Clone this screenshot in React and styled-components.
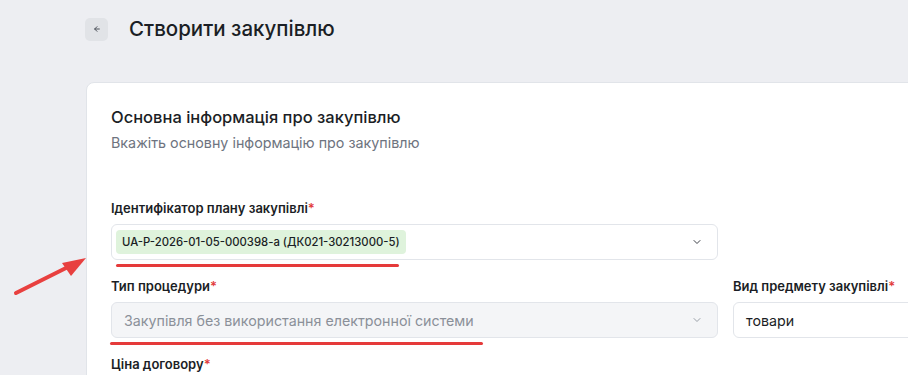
import styled, { createGlobalStyle } from "styled-components";

const GlobalStyle = createGlobalStyle`
  html, body {
    margin: 0;
    padding: 0;
    background: #edeef2;
    overflow: hidden;
    font-family: Inter, "Noto Sans", sans-serif;
    color: #1b1e25;
  }
`;

const Page = styled.div`
  position: relative;
  width: 908px;
  height: 375px;
  overflow: hidden;
  padding: 17px 0 0 85px;
  box-sizing: border-box;
`;

const Header = styled.div`
  display: flex;
  align-items: center;
  gap: 21px;
  height: 24px;
`;

const BackButton = styled.button`
  width: 23px;
  height: 23px;
  border: none;
  border-radius: 5px;
  background: #e1e3e7;
  display: flex;
  align-items: center;
  justify-content: center;
  padding: 0;
  color: #4b5059;
`;

const Title = styled.h1`
  margin: 0;
  font-size: 20.5px;
  font-weight: 500;
  line-height: 24px;
`;

const Card = styled.section`
  margin-top: 41px;
  margin-left: 1px;
  width: 1100px;
  background: #fff;
  border: 1px solid #e1e4e9;
  border-radius: 8px;
  padding: 22px 24px;
  box-sizing: border-box;
`;

const CardTitle = styled.h2`
  margin: 0;
  font-size: 16.5px;
  font-weight: 500;
  line-height: 24px;
`;

const CardSubtitle = styled.p`
  margin: 4px 0 0;
  font-size: 14.3px;
  line-height: 20px;
  color: #6e7480;
`;

const Form = styled.div`
  margin-top: 45px;
  display: grid;
  grid-template-columns: 607px 300px;
  column-gap: 15px;
  row-gap: 16px;
`;

const Field = styled.div`
  position: relative;
`;

const Label = styled.label`
  display: block;
  font-size: 13px;
  font-weight: 600;
  line-height: 20px;
  margin-bottom: 6px;
  color: #1b1e25;
  span {
    color: #e23b3b;
  }
`;

const SelectBox = styled.div`
  height: 36px;
  box-sizing: border-box;
  border: 1px solid #e2e5ea;
  border-radius: 6px;
  background: ${(p) => (p.$disabled ? "#f4f5f7" : "#fff")};
  display: flex;
  align-items: center;
  justify-content: space-between;
  padding: 0 14px 0 ${(p) => (p.$tag ? "4px" : "12px")};
  font-size: 14.25px;
  color: ${(p) => (p.$disabled ? "#8b9099" : "#1b1e25")};
`;

const Tag = styled.span`
  background: #dff3dc;
  border-radius: 4px;
  height: 24px;
  display: flex;
  align-items: center;
  padding: 0 6px;
  font-size: 11.3px;
  font-weight: 500;
  color: #1b1e25;
`;

const Chevron = styled.svg`
  width: 12px;
  height: 12px;
  color: ${(p) => (p.$muted ? "#9aa0a8" : "#3b3f47")};
`;

const Underline = styled.div`
  position: absolute;
  left: ${(p) => p.$left}px;
  width: ${(p) => p.$width}px;
  bottom: -7px;
  height: 3px;
  border-radius: 2px;
  background: #e53a3a;
`;

const Arrow = styled.svg`
  position: absolute;
  left: 0;
  top: 240px;
  width: 100px;
  height: 70px;
`;

const ChevronDown = ({ muted }) => (
  <Chevron $muted={muted} viewBox="0 0 24 24" fill="none" stroke="currentColor" strokeWidth="2" strokeLinecap="round" strokeLinejoin="round">
    <path d="m6 9 6 6 6-6" />
  </Chevron>
);

export default function App() {
  return (
    <>
      <GlobalStyle />
      <Page>
        <Header>
          <BackButton aria-label="back">
            <svg width="8" height="8" viewBox="0 0 24 24" fill="none" stroke="currentColor" strokeWidth="3" strokeLinecap="round" strokeLinejoin="round">
              <path d="M19 12H5" />
              <path d="m12 19-7-7 7-7" />
            </svg>
          </BackButton>
          <Title>Створити закупівлю</Title>
        </Header>
        <Card>
          <CardTitle>Основна інформація про закупівлю</CardTitle>
          <CardSubtitle>Вкажіть основну інформацію про закупівлю</CardSubtitle>
          <Form>
            <Field>
              <Label>Ідентифікатор плану закупівлі<span>*</span></Label>
              <SelectBox $tag>
                <Tag>UA-P-2026-01-05-000398-a (ДК021-30213000-5)</Tag>
                <ChevronDown />
              </SelectBox>
              <Underline $left={5} $width={283} />
            </Field>
            <div />
            <Field>
              <Label>Тип процедури<span>*</span></Label>
              <SelectBox $disabled>
                Закупівля без використання електронної системи
                <ChevronDown muted />
              </SelectBox>
              <Underline $left={-1} $width={373} />
            </Field>
            <Field>
              <Label>Вид предмету закупівлі<span>*</span></Label>
              <SelectBox>товари</SelectBox>
            </Field>
            <Field>
              <Label>Ціна договору<span>*</span></Label>
            </Field>
          </Form>
        </Card>
        <Arrow viewBox="0 0 100 70">
          <line x1="16" y1="53" x2="74" y2="24" stroke="#e8403f" strokeWidth="4" strokeLinecap="round" />
          <polygon points="86,18 62,23 71,36" fill="#e8403f" />
        </Arrow>
      </Page>
    </>
  );
}
